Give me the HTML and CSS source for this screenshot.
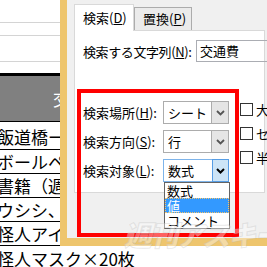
FILE: index.html
```html
<!DOCTYPE html>
<html lang="ja">
<head>
  <meta charset="UTF-8">
  <title>検索と置換</title>
  <link rel="stylesheet" href="styles.css">
</head>
<body>

  <div class="sheet">
    <div class="blank r1"></div>
    <div class="blank r2"></div>
    <div class="blank r3"></div>
    <div class="blank r4"></div>
    <div class="head"><span>交通費</span></div>
    <div class="row first">飯道橋ー東京</div>
    <div class="row">ボールペン</div>
    <div class="row">書籍（週刊）</div>
    <div class="row">ウシシ、ふふふ</div>
    <div class="row">怪人アイマスク</div>
    <div class="row last">怪人マスク×20枚</div>
  </div>

  <div class="dialog">
    <div class="dlg-body">
      <div class="tabs">
        <div class="tab active">検索(<u>D</u>)</div>
        <div class="tab">置換(<u>P</u>)</div>
      </div>
      <div class="panel">
        <div class="find-row">
          <label>検索する文字列(<u>N</u>):</label>
          <div class="input">交通費</div>
        </div>
        <div class="options">
          <div class="opt-list">
            <div class="opt">
              <label>検索場所(<u>H</u>):</label>
              <div class="select">
                <span>シート</span>
                <span class="btn"><svg width="9" height="6" viewBox="0 0 9 6"><polyline points="1,1 4.5,4.5 8,1" fill="none" stroke="#555" stroke-width="1.8"/></svg></span>
              </div>
            </div>
            <div class="opt">
              <label>検索方向(<u>S</u>):</label>
              <div class="select">
                <span>行</span>
                <span class="btn"><svg width="9" height="6" viewBox="0 0 9 6"><polyline points="1,1 4.5,4.5 8,1" fill="none" stroke="#555" stroke-width="1.8"/></svg></span>
              </div>
            </div>
            <div class="opt">
              <label>検索対象(<u>L</u>):</label>
              <div class="select open">
                <span>数式</span>
                <span class="btn"><svg width="9" height="6" viewBox="0 0 9 6"><polyline points="1,1 4.5,4.5 8,1" fill="none" stroke="#000" stroke-width="2"/></svg></span>
              </div>
            </div>
          </div>
          <div class="checks">
            <div class="check"><span class="box"></span>大文字</div>
            <div class="check"><span class="box"></span>セルの内容</div>
            <div class="check"><span class="box"></span>半角と全角</div>
          </div>
        </div>
      </div>
    </div>

    <div class="highlight"></div>

    <ul class="dropdown">
      <li>数式</li>
      <li class="selected">値</li>
      <li>コメント</li>
    </ul>
  </div>

  <div class="watermark">週刊アスキー</div>

</body>
</html>
```

FILE: styles.css
```css
html, body {
  margin: 0;
  width: 267px;
  height: 267px;
  overflow: hidden;
  background: #fff;
}

body {
  position: relative;
  font-family: "Noto Sans CJK JP", "Noto Sans", sans-serif;
}

/* spreadsheet behind the dialog */
.sheet {
  width: 267px;
}

.blank {
  border-bottom: 1px solid #d4d4d4;
}

.r1 { height: 22px; }
.r2 { height: 12px; }
.r3 { height: 25px; }
.r4 {
  height: 11px;
  border-bottom: 3px solid #000;
}

.head {
  height: 45px;
  background: #808080;
  border-bottom: 1px solid #000;
  color: #fff;
  font-size: 17px;
  line-height: 45px;
  padding-left: 53px;
}

.row {
  height: 23px;
  line-height: 23px;
  border-bottom: 1px solid #000;
  font-size: 17px;
  color: #000;
  text-indent: -3px;
  white-space: nowrap;
}

.row.first {
  height: 27px;
  line-height: 30px;
}

.row.last {
  height: 24px;
  line-height: 26px;
  border-bottom: none;
}

/* find & replace dialog */
.dialog {
  position: absolute;
  left: 60px;
  top: 0;
  width: 215px;
  border-left: 7px solid #eec56d;
  border-bottom: 8px solid #eec56d;
  font-size: 13px;
  color: #000;
  white-space: nowrap;
}

.dlg-body {
  height: 238px;
  background: #f0f0f0;
  padding: 4px 0 0 7px;
  box-sizing: border-box;
}

.tabs {
  display: flex;
  align-items: flex-end;
  height: 26px;
}

.tab {
  box-sizing: border-box;
  width: 58px;
  height: 23px;
  line-height: 22px;
  padding-left: 8px;
  background: #ebebeb;
  border: 1px solid #acacac;
  border-bottom: none;
}

.tab.active {
  width: 60px;
  height: 27px;
  line-height: 25px;
  background: #fff;
  border-color: #d9d9d9;
  margin-bottom: -1px;
  position: relative;
  z-index: 1;
}

.panel {
  box-sizing: border-box;
  width: 191px;
  height: 163px;
  background: #fff;
  border: 1px solid #d9d9d9;
  padding: 9px 0 0 8px;
}

.find-row {
  display: flex;
  align-items: center;
  height: 22px;
}

.find-row label {
  flex: none;
  width: 113px;
  letter-spacing: -0.4px;
}

.input {
  flex: none;
  box-sizing: border-box;
  width: 80px;
  height: 22px;
  line-height: 20px;
  border: 1px solid #abadb3;
  padding-left: 3px;
}

.options {
  display: flex;
  margin-top: 39px;
}

.opt-list {
  display: flex;
  flex-direction: column;
  gap: 6px;
}

.opt {
  display: flex;
  align-items: center;
  height: 23px;
}

.opt label {
  width: 80px;
}

.select {
  box-sizing: border-box;
  width: 66px;
  height: 23px;
  border: 1px solid #acacac;
  background: #fff;
  display: flex;
  align-items: center;
  justify-content: space-between;
  padding-left: 4px;
}

.select .btn {
  box-sizing: border-box;
  width: 17px;
  height: 21px;
  background: #e5e5e5;
  border-left: 1px solid #acacac;
  display: flex;
  align-items: center;
  justify-content: center;
}

.select.open {
  border-color: #7eb4ea;
}

.select.open .btn {
  background: #cce4f7;
  border: 1px solid #569de5;
  height: 23px;
  margin-right: -1px;
}

.checks {
  display: flex;
  flex-direction: column;
  gap: 11px;
  margin-left: 11px;
  padding-top: 2px;
}

.check {
  display: flex;
  align-items: center;
  height: 13px;
}

.check .box {
  box-sizing: border-box;
  width: 13px;
  height: 13px;
  border: 1px solid #333;
  background: #fff;
  margin-right: 3px;
}

.highlight {
  position: absolute;
  left: 10px;
  top: 89px;
  width: 162px;
  height: 148px;
  box-sizing: border-box;
  border: 4px solid #f00;
}

.dropdown {
  position: absolute;
  left: 97px;
  top: 182px;
  width: 66px;
  margin: 0;
  padding: 0;
  list-style: none;
  background: #fff;
  border: 1px solid #646464;
  box-sizing: border-box;
}

.dropdown li {
  height: 15px;
  line-height: 15px;
  padding-left: 2px;
  font-size: 13px;
}

.dropdown li.selected {
  background: #3399ff;
  color: #fff;
  outline: 1px dotted #f5c46a;
  outline-offset: -1px;
}

.watermark {
  position: absolute;
  left: 124px;
  top: 214px;
  font-size: 28px;
  font-weight: 900;
  font-style: italic;
  letter-spacing: -2px;
  color: rgba(255, 255, 255, 0.4);
  -webkit-text-stroke: 1px rgba(180, 180, 180, 0.3);
  white-space: nowrap;
}
```
